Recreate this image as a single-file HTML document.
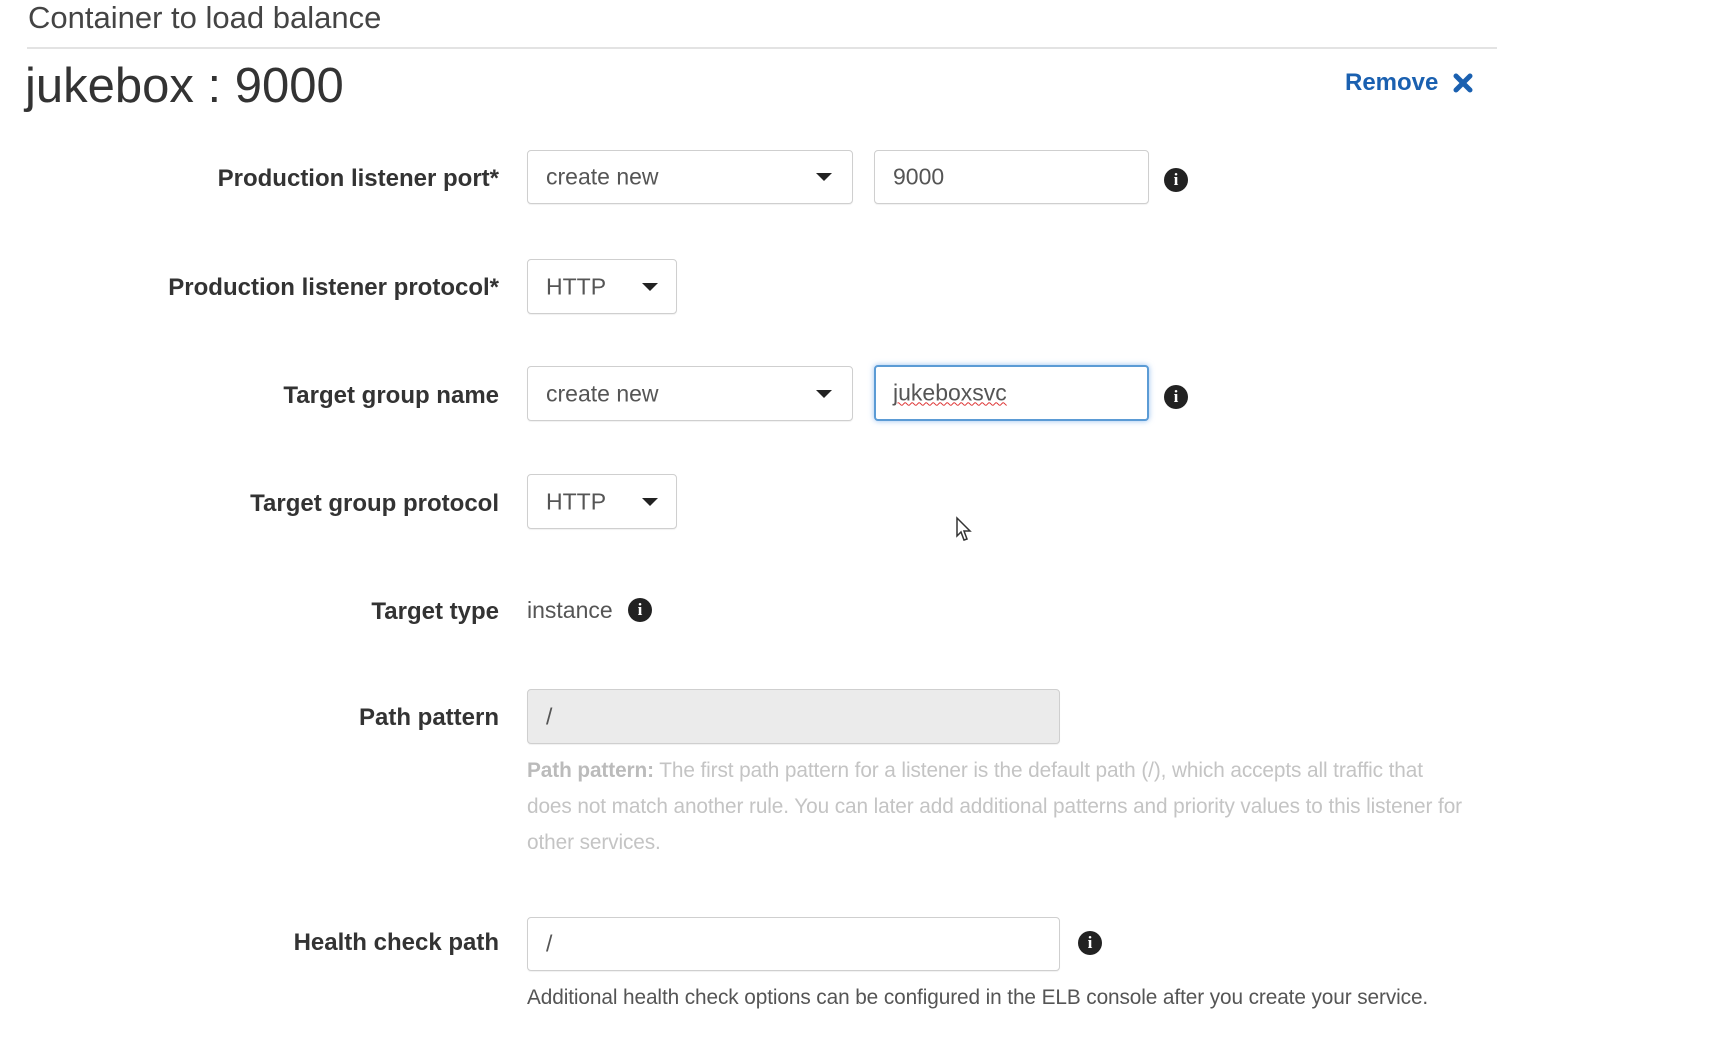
<!DOCTYPE html>
<html><head><meta charset="utf-8"><style>
body{margin:0;width:1710px;height:1040px;background:#fff;font-family:"Liberation Sans",Arial,sans-serif;position:relative;overflow:hidden;color:#333}
.a{position:absolute;white-space:nowrap}
.lbl{position:absolute;right:1211px;font-weight:bold;font-size:24px;color:#333;line-height:30px;letter-spacing:0px}
.box{position:absolute;border:1px solid #cfcfcf;border-radius:4px;background:#fff;box-sizing:border-box;box-shadow:0 1px 1px rgba(0,0,0,.06)}
.box span{position:absolute;left:18px;top:50%;transform:translateY(-50%);font-size:23px;color:#555}
.caret{position:absolute;top:50%;margin-top:-4px;width:0;height:0;border-left:8px solid transparent;border-right:8px solid transparent;border-top:8px solid #222}
.info{position:absolute;width:24px;height:24px;border-radius:50%;background:#222;color:#fff;font:bold 17px "Liberation Serif",serif;text-align:center;line-height:24px}
.help{position:absolute;left:527px;font-size:20.8px;color:#c4c4c4;letter-spacing:-0.1px;line-height:36px}
</style></head><body>
<div class="a" style="left:28px;top:0px;font-size:31px;color:#444">Container to load balance</div>
<div class="a" style="left:27px;top:47px;width:1470px;height:2px;background:#e3e3e3"></div>
<div class="a" style="left:25px;top:58px;font-size:49px;color:#333">jukebox : 9000</div>
<div class="a" style="left:1345px;top:69px;font-size:24px;font-weight:bold;color:#1a60b0">Remove</div>
<svg class="a" style="left:1453px;top:73px" width="20" height="20" viewBox="0 0 20 20"><path d="M3 3L17 17M17 3L3 17" stroke="#1a60b0" stroke-width="5" stroke-linecap="round"/></svg>

<div class="lbl" style="top:164px">Production listener port*</div>
<div class="box" style="left:527px;top:150px;width:326px;height:54px"><span>create new</span><div class="caret" style="right:20px"></div></div>
<div class="box" style="left:874px;top:150px;width:275px;height:54px"><span>9000</span></div>
<div class="info" style="left:1164px;top:168px">i</div>

<div class="lbl" style="top:273px">Production listener protocol*</div>
<div class="box" style="left:527px;top:259px;width:150px;height:55px"><span>HTTP</span><div class="caret" style="right:18px"></div></div>

<div class="lbl" style="top:381px">Target group name</div>
<div class="box" style="left:527px;top:366px;width:326px;height:55px"><span>create new</span><div class="caret" style="right:20px"></div></div>
<div class="box" style="left:874px;top:365px;width:275px;height:56px;border:2px solid #5b9bd5;box-shadow:0 0 6px rgba(80,150,230,.6)"><span style="left:17px;text-decoration:underline wavy #d33;text-decoration-thickness:1px">jukeboxsvc</span></div>
<div class="info" style="left:1164px;top:385px">i</div>

<div class="lbl" style="top:489px">Target group protocol</div>
<div class="box" style="left:527px;top:474px;width:150px;height:55px"><span>HTTP</span><div class="caret" style="right:18px"></div></div>
<svg class="a" style="left:955px;top:516px" width="20" height="28" viewBox="0 0 20 28"><path d="M2 2L2 20L6 16L9 24L12 23L9 15L15 15Z" fill="#fff" stroke="#333" stroke-width="1.5"/></svg>

<div class="lbl" style="top:597px">Target type</div>
<div class="a" style="left:527px;top:595px;font-size:23px;color:#555;line-height:30px">instance</div>
<div class="info" style="left:628px;top:598px">i</div>

<div class="lbl" style="top:703px">Path pattern</div>
<div class="box" style="left:527px;top:689px;width:533px;height:55px;background:#ebebeb"><span>/</span></div>
<div class="help" style="top:753px"><b style="color:#bbb">Path pattern:</b> The first path pattern for a listener is the default path (/), which accepts all traffic that</div>
<div class="help" style="top:789px">does not match another rule. You can later add additional patterns and priority values to this listener for</div>
<div class="help" style="top:825px">other services.</div>

<div class="lbl" style="top:928px">Health check path</div>
<div class="box" style="left:527px;top:917px;width:533px;height:54px"><span>/</span></div>
<div class="info" style="left:1078px;top:931px">i</div>
<div class="a" style="left:527px;top:986px;font-size:20.8px;color:#555;letter-spacing:-0.1px">Additional health check options can be configured in the ELB console after you create your service.</div>
</body></html>
